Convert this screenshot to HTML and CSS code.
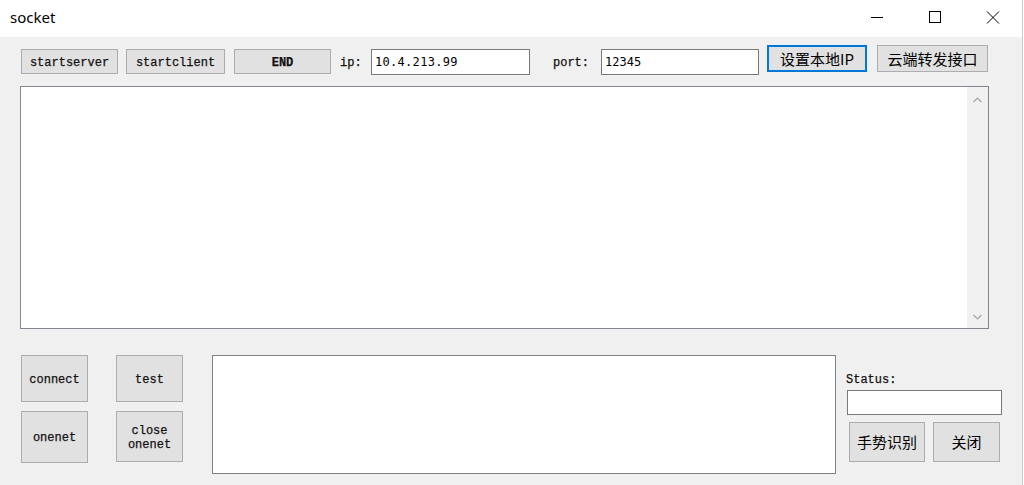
FILE: index.html
```html
<!DOCTYPE html>
<html>
<head>
<meta charset="utf-8">
<link rel="stylesheet" href="styles.css">
</head>
<body>
<div class="app">
  <div class="titlebar">
    <div class="title">socket</div>
    <div class="controls">
      <div class="ctl"><svg width="14" height="14" viewBox="0 0 14 14"><path d="M1 6.5H13" stroke="#000" stroke-width="1"/></svg></div>
      <div class="ctl"><svg width="14" height="14" viewBox="0 0 14 14"><rect x="1.5" y="0.5" width="11" height="11" fill="none" stroke="#000" stroke-width="1"/></svg></div>
      <div class="ctl"><svg width="14" height="14" viewBox="0 0 14 14"><path d="M1 0.5L13 12.5M13 0.5L1 12.5" stroke="#000" stroke-width="1"/></svg></div>
    </div>
  </div>
  <div class="content">
    <div class="toprow">
      <div class="btn mono b-server">startserver</div>
      <div class="btn mono b-client">startclient</div>
      <div class="btn mono b-end">END</div>
      <div class="label mono l-ip">ip:</div>
      <div class="input i-ip">10.4.213.99</div>
      <div class="label mono l-port">port:</div>
      <div class="input i-port">12345</div>
      <div class="btn cjk b-setip focus">设置本地IP</div>
      <div class="btn cjk b-cloud">云端转发接口</div>
    </div>
    <div class="bigbox">
      <div class="bigtext"></div>
      <div class="vscroll">
        <svg width="9" height="6" viewBox="0 0 9 6"><path d="M0.5 5L4.5 1L8.5 5" fill="none" stroke="#a6a6a6" stroke-width="1.2"/></svg>
        <svg width="9" height="6" viewBox="0 0 9 6"><path d="M0.5 1L4.5 5L8.5 1" fill="none" stroke="#a6a6a6" stroke-width="1.2"/></svg>
      </div>
    </div>
    <div class="bottom">
      <div class="grid">
        <div class="btn mono g1">connect</div>
        <div class="btn mono g2">test</div>
        <div class="btn mono g3">onenet</div>
        <div class="btn mono g4">close<br>onenet</div>
      </div>
      <div class="midbox"></div>
      <div class="side">
        <div class="label mono status">Status:</div>
        <div class="input i-status"></div>
        <div class="sidebtns">
          <div class="btn cjk b-gesture">手势识别</div>
          <div class="btn cjk b-close">关闭</div>
        </div>
      </div>
    </div>
  </div>
</div>
</body>
</html>
```
FILE: styles.css
```css
* { box-sizing: border-box; }
html, body { margin: 0; padding: 0; }
body { width: 1024px; height: 485px; background: #ffffff; overflow: hidden; }
.app { width: 1023px; height: 485px; background: #f0f0f0; border-right: 1px solid #cdcdcd; }

.titlebar { height: 37px; background: #ffffff; display: flex; align-items: flex-start; }
.title { font-family: "Noto Sans", "Noto Sans CJK SC", sans-serif; font-size: 15px; color: #000; padding-left: 10px; padding-top: 6px; line-height: 22px; }
.controls { margin-left: auto; display: flex; }
.ctl { width: 58px; height: 36px; display: flex; align-items: flex-start; justify-content: center; padding-top: 11px; }

.content { padding: 8px 0 0 0; }
.mono { font-family: "Liberation Mono", "DejaVu Sans Mono", monospace; font-size: 12px; color: #111; -webkit-text-stroke: 0.25px #111; }
.cjk { font-family: "Noto Sans CJK SC", "Liberation Sans", sans-serif; font-size: 15px; color: #000; }

.btn { background: #e1e1e1; border: 1px solid #adadad; display: flex; align-items: center; justify-content: center; text-align: center; line-height: 14px; }
.btn.mono { padding-top: 2px; }
.btn.focus { border: 2px solid #0078d7; }

.toprow { display: flex; align-items: flex-start; height: 30px; }
.b-server { margin-left: 21px; margin-top: 4px; width: 97px; height: 25px; }
.b-client { margin-left: 8px; margin-top: 4px; width: 99px; height: 25px; }
.b-end { margin-left: 9px; margin-top: 4px; width: 97px; height: 25px; font-weight: bold; }
.label { line-height: 14px; }
.l-ip { margin-left: 9px; margin-top: 11px; width: 31px; }
.input { background: #fff; border: 1px solid #7a7a7a; font-family: "DejaVu Sans Mono", monospace; font-size: 12px; color: #000; padding: 5px 0 0 3px; line-height: 14px; }
.i-ip { margin-top: 4px; width: 159px; height: 26px; letter-spacing: 0.3px; }
.l-port { margin-left: 23px; margin-top: 11px; width: 48px; }
.i-port { margin-top: 4px; width: 158px; height: 26px; }
.b-setip { margin-left: 8px; width: 100px; height: 27px; }
.b-cloud { margin-left: 10px; width: 111px; height: 27px; }

.bigbox { margin: 11px 0 0 20px; width: 969px; height: 243px; border: 1px solid #828790; background: #fff; display: flex; }
.bigtext { flex: 1; }
.vscroll { width: 21px; background: #f0f0f0; display: flex; flex-direction: column; justify-content: space-between; align-items: center; padding: 10px 0 8px 0; }

.bottom { display: flex; margin-top: 26px; align-items: flex-start; }
.grid { margin-left: 21px; display: grid; grid-template-columns: 67px 67px; column-gap: 28px; row-gap: 9px; grid-template-rows: 47px 52px; }
.g4 { height: 51px; }
.midbox { margin-left: 29px; width: 624px; height: 119px; border: 1px solid #828282; background: #fff; }
.side { margin-left: 10px; display: flex; flex-direction: column; padding-top: 18px; }
.status { margin-left: 0; height: 17px; }
.i-status { margin-left: 1px; width: 155px; height: 25px; }
.sidebtns { display: flex; margin-top: 7px; margin-left: 3px; }
.b-gesture { width: 76px; height: 40px; }
.b-close { margin-left: 8px; width: 67px; height: 40px; }
```
